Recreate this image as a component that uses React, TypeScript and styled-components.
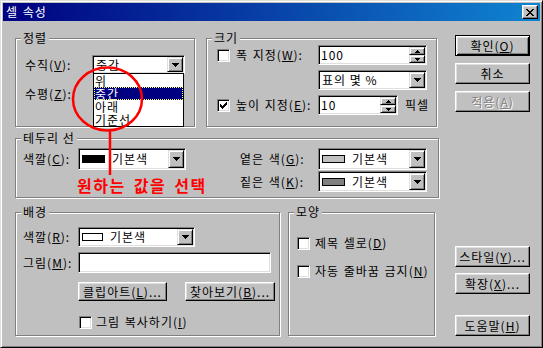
import React from "react";
import styled, { createGlobalStyle, css } from "styled-components";

const GlobalStyle = createGlobalStyle`
  html, body { margin: 0; padding: 0; background: #c0c0c0; }
  body {
    font-family: "Noto Sans CJK KR", "DejaVu Sans", sans-serif;
    font-size: 12px;
    letter-spacing: 1px;
    color: #000;
  }
  *, *::before, *::after { box-sizing: border-box; }
`;

const Window = styled.div`
  position: relative;
  width: 543px;
  height: 348px;
  background: #c0c0c0;
  border: 1px solid;
  border-color: #dfdfdf #000 #000 #dfdfdf;
  box-shadow: inset 1px 1px 0 #fff, inset -1px -1px 0 #808080;
  padding: 2px;
  display: flex;
  flex-direction: column;
`;

const TitleBar = styled.div`
  height: 18px;
  flex: none;
  display: flex;
  align-items: center;
  justify-content: space-between;
  padding: 0 2px 0 3px;
  background: linear-gradient(90deg, #000080 0%, #1084d0 100%);
  color: #fff;
`;

const TitleText = styled.span`
  font-size: 12px;
  line-height: 14px;
  letter-spacing: 1px;
  word-spacing: 1px;
`;

const CloseButton = styled.span`
  width: 16px;
  height: 14px;
  background: #c0c0c0;
  border: 1px solid;
  border-color: #fff #000 #000 #fff;
  box-shadow: inset -1px -1px 0 #808080, inset 1px 1px 0 #dfdfdf;
  display: flex;
  align-items: center;
  justify-content: center;
`;

const Body = styled.div`
  flex: 1;
  display: flex;
  gap: 16px;
  padding: 10px 0 0 12px;
`;

const LeftColumn = styled.div`
  width: 424px;
  display: flex;
  flex-direction: column;
`;

const GroupRow = styled.div<{ $gap: number; $mt: number }>`
  display: flex;
  gap: ${(p) => p.$gap}px;
  margin-top: ${(p) => p.$mt}px;
`;

const Group = styled.fieldset<{ $w: number; $h: number }>`
  margin: 0;
  padding: 0;
  min-width: 0;
  flex: none;
  width: ${(p) => p.$w}px;
  height: ${(p) => p.$h}px;
  border: 1px solid #808080;
  box-shadow: inset 1px 1px 0 #fff, 1px 1px 0 #fff;
`;

const Legend = styled.legend`
  margin-left: 5px;
  padding: 0 2px;
  font-size: 12px;
  line-height: 14px;
  background: #c0c0c0;
`;

const GroupContent = styled.div<{ $pt: number; $pl: number }>`
  padding: ${(p) => p.$pt}px 0 0 ${(p) => p.$pl}px;
  display: flex;
  flex-direction: column;
`;

const FormRow = styled.div<{ $label: number; $h: number; $mt?: number }>`
  display: grid;
  grid-template-columns: ${(p) => p.$label}px auto;
  align-items: center;
  height: ${(p) => p.$h}px;
  margin-top: ${(p) => p.$mt ?? 0}px;
`;

const Label = styled.span`
  font-size: 12px;
  line-height: 14px;
  word-spacing: 1px;
  white-space: nowrap;
`;

const Field = styled.div<{ $w: number; $h: number }>`
  position: relative;
  width: ${(p) => p.$w}px;
  height: ${(p) => p.$h}px;
  flex: none;
  background: #fff;
  border: 1px solid;
  border-color: #808080 #fff #fff #808080;
  box-shadow: inset 1px 1px 0 #000, inset -1px -1px 0 #dfdfdf;
  padding: 1px;
  display: flex;
  align-items: stretch;
`;

const FieldText = styled.span<{ $pl?: number }>`
  flex: 1;
  min-width: 0;
  display: flex;
  align-items: center;
  gap: 7px;
  padding-left: ${(p) => p.$pl ?? 2}px;
  font-size: 12px;
  line-height: 14px;
  white-space: nowrap;
`;

const raised = css`
  background: #c0c0c0;
  border: 1px solid;
  border-color: #dfdfdf #000 #000 #dfdfdf;
  box-shadow: inset 1px 1px 0 #fff, inset -1px -1px 0 #808080;
`;

const DropButton = styled.span`
  ${raised};
  width: 16px;
  flex: none;
  display: flex;
  align-items: center;
  justify-content: center;
`;

const SpinColumn = styled.span`
  width: 16px;
  flex: none;
  display: flex;
  flex-direction: column;
`;

const SpinHalf = styled.span`
  ${raised};
  flex: 1;
  display: flex;
  align-items: center;
  justify-content: center;
`;

const Swatch = styled.span<{ $c: string; $w: number }>`
  width: ${(p) => p.$w}px;
  height: 8px;
  flex: none;
  background: ${(p) => p.$c};
  border: 1px solid #000;
`;

const ListBox = styled.ul`
  position: absolute;
  top: 100%;
  left: 0;
  width: 100%;
  margin: 0;
  padding: 0;
  list-style: none;
  background: #fff;
  border: 1px solid #000;
  z-index: 2;
`;

const ListItem = styled.li<{ $sel?: boolean }>`
  height: 13px;
  line-height: 13px;
  padding-left: 1px;
  font-size: 12px;
  white-space: nowrap;
  ${(p) =>
    p.$sel &&
    css`
      background: #000080;
      color: #fff;
      outline: 1px dotted #ffff60;
      outline-offset: -1px;
    `}
`;

const CheckRow = styled.div<{ $gap: number; $ml?: number }>`
  display: flex;
  align-items: center;
  gap: ${(p) => p.$gap}px;
  margin-left: ${(p) => p.$ml ?? 0}px;
  white-space: nowrap;
`;

const CheckBox = styled.span`
  width: 13px;
  height: 13px;
  flex: none;
  background: #fff;
  border: 1px solid;
  border-color: #808080 #fff #fff #808080;
  box-shadow: inset 1px 1px 0 #000, inset -1px -1px 0 #dfdfdf;
  display: flex;
  align-items: center;
  justify-content: center;
`;

const SizeGrid = styled.div`
  padding-left: 10px;
  display: grid;
  grid-template-columns: 101px auto;
  grid-auto-rows: 20px;
  row-gap: 5px;
  align-items: center;
`;

const InlineRow = styled.div<{ $gap: number }>`
  display: flex;
  align-items: center;
  gap: ${(p) => p.$gap}px;
`;

const BorderContent = styled.div`
  padding: 3px 0 0 7px;
  display: flex;
  align-items: flex-start;
`;

const ColorGrid = styled.div`
  margin-left: 54px;
  display: grid;
  grid-template-columns: 78px 109px;
  grid-template-rows: 22px 21px;
  row-gap: 1px;
  align-items: center;
`;

const ButtonColumn = styled.div`
  width: 75px;
  display: flex;
  flex-direction: column;
`;

const ButtonStack = styled.div<{ $gap: number; $mt: number }>`
  display: flex;
  flex-direction: column;
  gap: ${(p) => p.$gap}px;
  margin-top: ${(p) => p.$mt}px;
`;

const PushButton = styled.button<{ $w: number; $h: number; $default?: boolean }>`
  width: ${(p) => p.$w}px;
  height: ${(p) => p.$h}px;
  flex: none;
  margin: 0;
  padding: 0;
  font-family: inherit;
  font-size: 12px;
  line-height: 14px;
  letter-spacing: 1px;
  color: #000;
  background: #c0c0c0;
  border: 1px solid;
  border-color: #fff #000 #000 #fff;
  box-shadow: inset -1px -1px 0 #808080, inset 1px 1px 0 #dfdfdf;
  display: flex;
  align-items: center;
  justify-content: center;
  white-space: nowrap;
  ${(p) =>
    p.$default &&
    css`
      border-color: #000;
      box-shadow: inset 1px 1px 0 #fff, inset -1px -1px 0 #000,
        inset 2px 2px 0 #dfdfdf, inset -2px -2px 0 #808080;
    `}
  &:disabled {
    color: #808080;
    text-shadow: 1px 1px 0 #fff;
  }
`;

const AnnotationLayer = styled.svg`
  position: absolute;
  left: -1px;
  top: -1px;
  width: 543px;
  height: 348px;
  pointer-events: none;
  z-index: 5;
`;

const AnnotationText = styled.div`
  position: absolute;
  left: 76px;
  top: 175px;
  z-index: 5;
  color: #ff0000;
  font-weight: 700;
  font-size: 16px;
  line-height: 18px;
  letter-spacing: 1.5px;
  word-spacing: 3px;
  white-space: nowrap;
`;

const Arrow = () => (
  <svg width="7" height="4" viewBox="0 0 7 4" shapeRendering="crispEdges">
    <path d="M0 0h7v1H0zM1 1h5v1H1zM2 2h3v1H2zM3 3h1v1H3z" fill="#000" />
  </svg>
);

const SmallArrow = ({ up }: { up?: boolean }) => (
  <svg width="5" height="3" viewBox="0 0 5 3" shapeRendering="crispEdges">
    <path
      d={up ? "M2 0h1v1H2zM1 1h3v1H1zM0 2h5v1H0z" : "M0 0h5v1H0zM1 1h3v1H1zM2 2h1v1H2z"}
      fill="#000"
    />
  </svg>
);

const Check = () => (
  <svg width="7" height="7" viewBox="0 0 7 7" shapeRendering="crispEdges">
    <path
      d="M6 0h1v1H6zM5 1h2v1H5zM0 2h1v1H0zM4 2h3v1H4zM0 3h2v1H0zM3 3h3v1H3zM0 4h5v1H0zM1 5h3v1H1zM2 6h1v1H2z"
      fill="#000"
    />
  </svg>
);

const Combo = ({ w, h, children }: { w: number; h: number; children: React.ReactNode }) => (
  <Field $w={w} $h={h}>
    <FieldText>{children}</FieldText>
    <DropButton>
      <Arrow />
    </DropButton>
  </Field>
);

const SpinField = ({ w, value }: { w: number; value: string }) => (
  <Field $w={w} $h={20}>
    <FieldText $pl={1}>{value}</FieldText>
    <SpinColumn>
      <SpinHalf>
        <SmallArrow up />
      </SpinHalf>
      <SpinHalf>
        <SmallArrow />
      </SpinHalf>
    </SpinColumn>
  </Field>
);

const Checkbox = ({ checked }: { checked?: boolean }) => (
  <CheckBox>{checked && <Check />}</CheckBox>
);

export default function App() {
  return (
    <>
      <GlobalStyle />
      <Window>
        <TitleBar>
          <TitleText>셀 속성</TitleText>
          <CloseButton>
            <svg width="8" height="7" viewBox="0 0 8 7" shapeRendering="crispEdges">
              <path
                d="M0 0h2v1H0zM6 0h2v1H6zM1 1h2v1H1zM5 1h2v1H5zM2 2h4v1H2zM3 3h2v1H3zM2 4h4v1H2zM1 5h2v1H1zM5 5h2v1H5zM0 6h2v1H0zM6 6h2v1H6z"
                fill="#000"
              />
            </svg>
          </CloseButton>
        </TitleBar>

        <Body>
          <LeftColumn>
            <GroupRow $gap={11} $mt={0}>
              <Group $w={180} $h={96}>
                <Legend>정렬</Legend>
                <GroupContent $pt={10} $pl={9}>
                  <FormRow $label={67} $h={19}>
                    <Label>
                      수직(<u>V</u>):
                    </Label>
                    <Field $w={93} $h={19}>
                      <FieldText>중간</FieldText>
                      <DropButton>
                        <Arrow />
                      </DropButton>
                      <ListBox>
                        <ListItem>위</ListItem>
                        <ListItem $sel>중간</ListItem>
                        <ListItem>아래</ListItem>
                        <ListItem>기준선</ListItem>
                      </ListBox>
                    </Field>
                  </FormRow>
                  <FormRow $label={67} $h={19} $mt={10}>
                    <Label>
                      수평(<u>Z</u>):
                    </Label>
                  </FormRow>
                </GroupContent>
              </Group>

              <Group $w={231} $h={96}>
                <Legend>크기</Legend>
                <SizeGrid>
                  <CheckRow $gap={6}>
                    <Checkbox />
                    <Label>
                      폭 지정(<u>W</u>):
                    </Label>
                  </CheckRow>
                  <SpinField w={109} value="100" />
                  <span />
                  <Combo w={109} h={20}>
                    표의 몇 %
                  </Combo>
                  <CheckRow $gap={6}>
                    <Checkbox checked />
                    <Label>
                      높이 지정(<u>E</u>):
                    </Label>
                  </CheckRow>
                  <InlineRow $gap={7}>
                    <SpinField w={80} value="10" />
                    <Label>픽셀</Label>
                  </InlineRow>
                </SizeGrid>
              </Group>
            </GroupRow>

            <GroupRow $gap={0} $mt={4}>
              <Group $w={424} $h={67}>
                <Legend>테두리 선</Legend>
                <BorderContent>
                  <FormRow $label={55} $h={22}>
                    <Label>
                      색깔(<u>C</u>):
                    </Label>
                    <Combo w={108} h={22}>
                      <Swatch $c="#000" $w={23} />
                      기본색
                    </Combo>
                  </FormRow>
                  <ColorGrid>
                    <Label>
                      옅은 색(<u>G</u>):
                    </Label>
                    <Combo w={109} h={22}>
                      <Swatch $c="#c0c0c0" $w={23} />
                      기본색
                    </Combo>
                    <Label>
                      짙은 색(<u>K</u>):
                    </Label>
                    <Combo w={109} h={21}>
                      <Swatch $c="#808080" $w={23} />
                      기본색
                    </Combo>
                  </ColorGrid>
                </BorderContent>
              </Group>
            </GroupRow>

            <GroupRow $gap={8} $mt={7}>
              <Group $w={265} $h={131}>
                <Legend>배경</Legend>
                <GroupContent $pt={8} $pl={7}>
                  <FormRow $label={55} $h={20}>
                    <Label>
                      색깔(<u>R</u>):
                    </Label>
                    <Combo w={117} h={20}>
                      <Swatch $c="#fff" $w={21} />
                      기본색
                    </Combo>
                  </FormRow>
                  <FormRow $label={55} $h={21} $mt={5}>
                    <Label>
                      그림(<u>M</u>):
                    </Label>
                    <Field $w={193} $h={21} />
                  </FormRow>
                  <FormRow $label={55} $h={19} $mt={9}>
                    <span />
                    <InlineRow $gap={18}>
                      <PushButton $w={89} $h={19}>
                        클립아트(<u>L</u>)...
                      </PushButton>
                      <PushButton $w={90} $h={19}>
                        찾아보기(<u>B</u>)...
                      </PushButton>
                    </InlineRow>
                  </FormRow>
                  <FormRow $label={55} $h={13} $mt={14}>
                    <span />
                    <CheckRow $gap={4} $ml={1}>
                      <Checkbox />
                      <Label>
                        그림 복사하기(<u>I</u>)
                      </Label>
                    </CheckRow>
                  </FormRow>
                </GroupContent>
              </Group>

              <Group $w={147} $h={131}>
                <Legend>모양</Legend>
                <GroupContent $pt={17} $pl={8}>
                  <CheckRow $gap={5}>
                    <Checkbox />
                    <Label>
                      제목 셀로(<u>D</u>)
                    </Label>
                  </CheckRow>
                  <FormRow $label={0} $h={13} $mt={14}>
                    <span />
                    <CheckRow $gap={5}>
                      <Checkbox />
                      <Label>
                        자동 줄바꿈 금지(<u>N</u>)
                      </Label>
                    </CheckRow>
                  </FormRow>
                </GroupContent>
              </Group>
            </GroupRow>
          </LeftColumn>

          <ButtonColumn>
            <ButtonStack $gap={7} $mt={4}>
              <PushButton $w={75} $h={21} $default>
                확인(<u>O</u>)
              </PushButton>
              <PushButton $w={75} $h={21}>
                취소
              </PushButton>
              <PushButton $w={75} $h={21} disabled>
                적용(<u>A</u>)
              </PushButton>
            </ButtonStack>
            <ButtonStack $gap={6} $mt={134}>
              <PushButton $w={75} $h={21}>
                스타일(<u>Y</u>)...
              </PushButton>
              <PushButton $w={75} $h={21}>
                확장(<u>X</u>)...
              </PushButton>
            </ButtonStack>
            <ButtonStack $gap={0} $mt={21}>
              <PushButton $w={75} $h={21}>
                도움말(<u>H</u>)
              </PushButton>
            </ButtonStack>
          </ButtonColumn>
        </Body>

        <AnnotationLayer viewBox="0 0 543 348">
          <ellipse cx="107.5" cy="99" rx="34.5" ry="31.5" fill="none" stroke="#ff0000" strokeWidth="2.5" />
          <line x1="110" y1="130" x2="110" y2="175" stroke="#ff0000" strokeWidth="2.5" />
        </AnnotationLayer>
        <AnnotationText>원하는 값을 선택</AnnotationText>
      </Window>
    </>
  );
}
